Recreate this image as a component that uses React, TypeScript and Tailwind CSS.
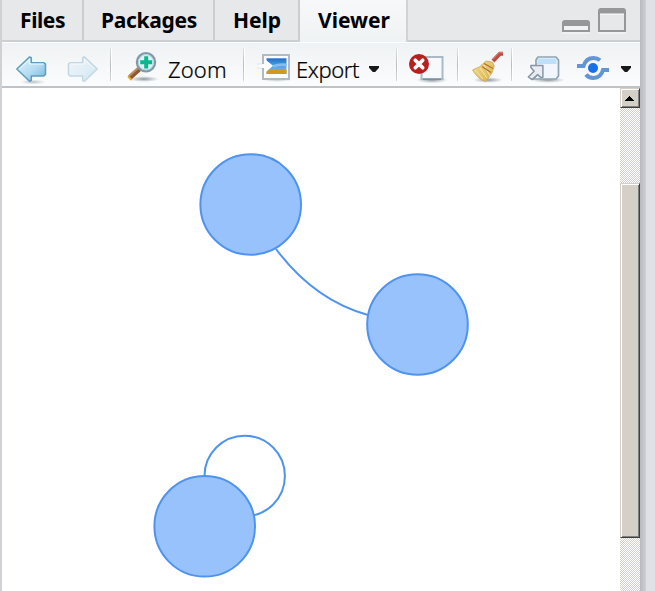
import React from "react";

type CellProps = { x: number; w: number; label: string; children: React.ReactNode };

function Cell({ x, w, label, children }: CellProps) {
  return (
    <svg role="img" aria-label={label} width={w} height={43} viewBox={`${x} 43 ${w} 43`} className="block shrink-0">
      {children}
    </svg>
  );
}

function Separator() {
  return <div className="h-[33px] w-[2px] shrink-0 border-r border-white bg-linear-to-b from-[#dfe2e4] via-[#b9bdc0] to-[#d5d8da]" />;
}

function Caret({ x, w }: { x: number; w: number }) {
  return (
    <Cell x={x} w={w} label="Menu">
      <path d={`M${x} 66h10v1.800l-3.800 4.200h-2.400l-3.800-4.200z`} fill="#181818" />
    </Cell>
  );
}

function ToolbarIcons() {
  return (
    <defs>
      <linearGradient id="arrow" x1="0" y1="0" x2="1" y2="1">
        <stop offset="0" stopColor="#e1f3fc" />
        <stop offset="0.55" stopColor="#b4dcf2" />
        <stop offset="1" stopColor="#70b3d8" />
      </linearGradient>
      <linearGradient id="sky" x1="0" y1="0" x2="0" y2="1">
        <stop offset="0" stopColor="#1c6fcb" />
        <stop offset="0.45" stopColor="#4f9ce0" />
        <stop offset="1" stopColor="#8dc2e8" />
      </linearGradient>
      <linearGradient id="straw" x1="0" y1="0" x2="1" y2="1">
        <stop offset="0" stopColor="#f2df9b" />
        <stop offset="1" stopColor="#d9ae41" />
      </linearGradient>
      <radialGradient id="shade">
        <stop offset="0" stopColor="#68757d" stopOpacity="0.75" />
        <stop offset="1" stopColor="#87949b" stopOpacity="0" />
      </radialGradient>
    </defs>
  );
}

const label = "mt-[9px] shrink-0 font-['Noto_Sans'] text-[22px] leading-7 font-light text-black [-webkit-text-stroke:0.2px_black]";

function Toolbar() {
  return (
    <div className="flex h-[45px] items-center border-b-2 border-[#bec3c8] bg-linear-to-b from-[#eff2f4] to-[#fbfcfd]">
      <div className="w-[12px] shrink-0" />
      <Cell x={14} w={36} label="Back">
        <ToolbarIcons />
        <ellipse cx="33" cy="82" rx="13" ry="2.5" fill="url(#shade)" opacity=".6" />
        <path d="M16.8 69 29.5 57l1.8.8v5h12.5l1.7 1.4v10.3l-1.7 1.5H31.3v4.5l-1.8.8z" fill="url(#arrow)" stroke="#5f9dbd" strokeWidth="1.5" strokeLinejoin="round" />
        <path d="m19.3 69 10-9.5V64h14.5" fill="none" stroke="#effaff" strokeWidth="1" />
      </Cell>
      <div className="w-[16px] shrink-0" />
      <Cell x={66} w={36} label="Forward">
        <g opacity=".32">
          <path d="M97.2 69 84.5 57l-1.8.8v5H70.2l-1.7 1.4v10.3l1.7 1.5h12.5v4.5l1.8.8z" fill="url(#arrow)" stroke="#5794b4" strokeWidth="1.5" strokeLinejoin="round" />
          <path d="m94.7 69-10-9.5V64H70" fill="none" stroke="#fff" />
        </g>
      </Cell>
      <div className="w-[8px] shrink-0" />
      <Separator />
      <div className="w-[15px] shrink-0" />
      <Cell x={127} w={34} label="Zoom">
        <ellipse cx="144" cy="79" rx="15" ry="3" fill="url(#shade)" />
        <path d="m129.5 78 10-9" stroke="#8b5a32" strokeWidth="5" />
        <path d="m129 76 9-8" stroke="#c28d5d" strokeWidth="2.2" />
        <path d="m128 76.4 3.6 3.6" stroke="#e8ac25" strokeWidth="2" />
        <circle cx="146" cy="62.3" r="9.1" fill="#dff3f3" stroke="#7f99aa" strokeWidth="2.3" />
        <circle cx="146" cy="62.3" r="7.6" fill="none" stroke="#b6d3df" strokeWidth="1" />
        <path d="M144.2 56.3h4v4h4v4h-4v4.2h-4v-4.2h-4v-4h4z" fill="#08b890" />
      </Cell>
      <span className={`${label} ml-[7px] w-[75px] tracking-[0.1px]`}>Zoom</span>
      <Separator />
      <div className="w-[10px] shrink-0" />
      <Cell x={255} w={37} label="Export">
        <ellipse cx="277" cy="80" rx="15" ry="2" fill="url(#shade)" opacity=".5" />
        <path d="M263 55h26v24h-26z" fill="#fbfcfd" stroke="#b1bac4" strokeWidth="2" />
        <path d="M266.5 58.3h20v15.7h-20z" fill="url(#sky)" />
        <path d="M273 65q6-2.500 13.500-1.500v3q-6-1.500-13.500 1z" fill="#86bdeb" />
        <path d="M266.500 70.500q10-2.500 20-.5v4h-20z" fill="#d29921" />
        <path d="M259 64h6v-4.700l8 6.500-8 7V68h-6z" fill="white" />
        <path d="M257 64h5M257 68h5" stroke="#dce0e3" strokeWidth=".8" />
      </Cell>
      <span className={`${label} ml-[4px] w-[73px] tracking-[-0.4px]`}>Export</span>
      <Caret x={369} w={27} />
      <Separator />
      <div className="w-[8px] shrink-0" />
      <Cell x={406} w={42} label="Remove current item">
        <ellipse cx="432" cy="80" rx="16" ry="3.3" fill="url(#shade)" />
        <path d="M421.5 57h21v22h-21z" fill="#f7fafc" stroke="#a9b9c7" strokeWidth="2" />
        <path d="M423 79.3h18" stroke="#7d909e" strokeWidth="1.5" />
        <circle cx="419" cy="64" r="10" fill="#b81f1f" />
        <path d="m415.300 60.300 7.400 7.400m0-7.400-7.400 7.400" stroke="#fff" strokeWidth="3.7" strokeLinecap="round" />
      </Cell>
      <div className="w-[9px] shrink-0" />
      <Separator />
      <div className="w-[10px] shrink-0" />
      <Cell x={469} w={37} label="Clear all items">
        <ellipse cx="488" cy="80" rx="15" ry="3" fill="url(#shade)" />
        <path d="m493 61 7-7.3h3" fill="none" stroke="#b64c43" strokeWidth="4" />
        <path d="m493 59 6-6.3h4" fill="none" stroke="#da766c" strokeWidth="1.2" />
        <path d="m486 61 6.5 1.2 1.8 3.8-2.5 7.3-6.2 8.2q-7-1.6-13.100-11.500l7-3.200z" fill="url(#straw)" stroke="#cba854" strokeWidth=".8" />
        <path d="m475 70 8 9m-3-11 7 10m-3-13 6 11" stroke="#f5e6a7" strokeWidth="1" />
        <path d="m482 66.500 9 6m-7-9 9 5" stroke="#b46f2d" strokeWidth="1.3" />
      </Cell>
      <div className="w-[5px] shrink-0" />
      <Separator />
      <div className="w-[11px] shrink-0" />
      <Cell x={524} w={41} label="Show in new window">
        <ellipse cx="548" cy="80" rx="17" ry="3" fill="url(#shade)" />
        <path d="m538 57-2 3v16l-3 3h23l2.500-3V60l-2.500-3z" fill="#f0f6fb" stroke="#8fa2b2" strokeWidth="1.7" strokeLinejoin="round" />
        <path d="M538 58.500h18.500V64H537z" fill="#bfe0f8" />
        <path d="m528.3 77 5.8-5.8-3.2-3.7v-2h12v11.8l-2 .3-3.3-3-5.5 5z" fill="#e9edf1" stroke="#8795a4" strokeWidth="1.5" strokeLinejoin="round" />
      </Cell>
      <div className="w-[10px] shrink-0" />
      <Cell x={575} w={36} label="Publish">
        <path d="M577 66h6.500q2.500-8 10-8 4 0 6.500 2.300M586 74.500q2.500 3.500 7.500 3.500 7.500-.4 9.500-8h6" fill="none" stroke="#6395d5" strokeWidth="4" />
        <circle cx="593" cy="68" r="5" fill="#1870ea" />
      </Cell>
      <div className="w-[10px] shrink-0" />
      <Caret x={621} w={18} />
    </div>
  );
}

const inactiveTab = "h-full shrink-0 border-r-2 border-b-2 border-r-[#cbced1] border-b-[#cccfd1] bg-[#e6e8ea] pt-[6px]";

function Tabs() {
  return (
    <div className="flex h-[42px] font-['Noto_Sans'] text-[21px] leading-7 font-bold text-black">
      <div className={`${inactiveTab} w-[82px] pl-[18px] tracking-[-0.4px]`}>Files</div>
      <div className={`${inactiveTab} w-[131px] pl-[17px] tracking-[-0.3px]`}>Packages</div>
      <div className={`${inactiveTab} w-[85px] pl-[18px] tracking-[0px]`}>Help</div>
      <div className="h-full w-[108px] shrink-0 border-r-2 border-[#d0d3d6] bg-linear-to-b from-[#f7f8f9] to-[#eff2f4] pt-[6px] pl-[18px] tracking-[0px]">Viewer</div>
      <div className="flex flex-1 justify-end border-b-2 border-[#cccfd1] bg-[#e6e8ea]">
        <svg role="img" aria-label="Minimize and maximize" width="79" height="40" viewBox="561 0 79 40">
          <path d="M562 32v-9q0-3 3-3h22q3 0 3 3v9z" fill="#959798" />
          <path d="M564 26h24v4h-24z" fill="#f2f3f4" />
          <path d="M562 33h28M598 33h28" stroke="#fafafa" />
          <path d="M598 32V11q0-3 3-3h22q3 0 3 3v21z" fill="#959798" />
          <path d="M600 14h24v16h-24z" fill="#e7e8e9" />
          <path d="M600 14h24" stroke="#fff" />
        </svg>
      </div>
    </div>
  );
}

function Scrollbar() {
  return (
    <div className="flex w-[20px] shrink-0 flex-col bg-[conic-gradient(#d4d0c8_25%,#fff_0_50%,#d4d0c8_0_75%,#fff_0)] bg-[length:2px_2px]">
      <div className="flex h-[20px] items-center border border-[#d4d0c8] border-r-[#404040] border-b-[#404040] bg-[#d4d0c8] pl-[4px] shadow-[inset_1px_1px_#fff,inset_-1px_-1px_#808080]">
        <svg width="9" height="5" viewBox="0 0 9 5" shapeRendering="crispEdges"><path d="M4 0h1v1h1v1h1v1h1v1h1v1H0V4h1V3h1V2h1V1h1z" fill="#000" /></svg>
      </div>
      <div className="mt-[75px] h-[355px] border border-[#d4d0c8] border-r-[#404040] border-b-[#404040] bg-[#d4d0c8] shadow-[inset_1px_1px_#fff,inset_-1px_-1px_#808080]" />
    </div>
  );
}

export default function App() {
  return (
    <div className="flex h-[591px] w-[655px] overflow-hidden bg-[#e0e1e6]">
      <main className="flex w-[640px] shrink-0 flex-col border-l-2 border-[#cfd1d4] bg-white">
        <Tabs />
        <div className="h-px shrink-0 bg-white" />
        <Toolbar />
        <div className="flex min-h-0 flex-1">
          <svg role="img" aria-label="Network graph" width="618" height="503" viewBox="2 88 618 503" className="block shrink-0">
            <g stroke="#5093ee" strokeWidth="2">
              <path d="M276 249Q314 300 368 315" fill="none" />
              <circle cx="244.7" cy="476" r="40.2" fill="none" />
              <circle cx="250.7" cy="204.5" r="50.3" fill="#97c2fc" />
              <circle cx="417.5" cy="324.5" r="50.3" fill="#97c2fc" />
              <circle cx="204.7" cy="526.3" r="50.3" fill="#97c2fc" />
            </g>
          </svg>
          <Scrollbar />
        </div>
      </main>
      <div className="w-[6px] shrink-0 bg-linear-to-r from-[#b7b9bf] to-[#cfd0d6]" />
    </div>
  );
}
